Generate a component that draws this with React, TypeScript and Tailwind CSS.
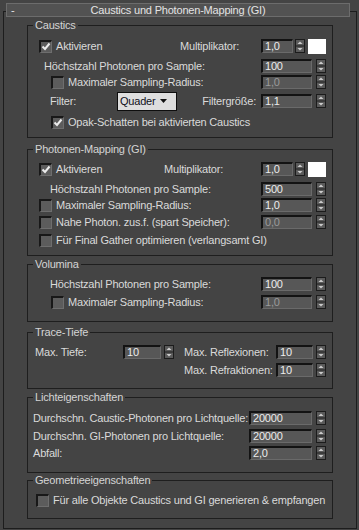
import type { ReactNode } from "react";

const font = "font-['Liberation_Sans',Arial,sans-serif] text-[11px] tracking-[-0.2px]";

function Check({ checked }: { checked?: boolean }) {
  return (
    <span className="w-[13px] h-[13px] shrink-0 flex items-center justify-center bg-[#5c5c5c] border-t-2 border-l-2 border-t-[#181818] border-l-[#181818] border-b border-r border-b-[#6e6e6e] border-r-[#6e6e6e]">
      {checked && (
        <svg width="10" height="9" viewBox="0 0 10 9">
          <path d="M1.5 4.5 L4 7 L8.5 1.5" fill="none" stroke="#ececec" strokeWidth="2" />
        </svg>
      )}
    </span>
  );
}

function Field({ w, value, disabled }: { w: string; value: string; disabled?: boolean }) {
  return (
    <div
      className={`${w} h-[14px] shrink-0 flex items-center pl-[2px] leading-none bg-[#575757] border-t-2 border-l-2 border-t-[#131313] border-l-[#131313] border-b border-r border-b-[#6a6a6a] border-r-[#6a6a6a] ${
        disabled ? "text-[#9a9a9a]" : "text-[#ececec]"
      }`}
    >
      {value}
    </div>
  );
}

function Spin() {
  return (
    <svg width="10" height="14" viewBox="0 0 10 14" className="shrink-0">
      <rect x="0.5" y="0.5" width="9" height="13" fill="#5a5a5a" stroke="#1c1c1c" />
      <line x1="0" y1="7" x2="10" y2="7" stroke="#1c1c1c" />
      <path d="M2.5 5 L5 2.5 L7.5 5Z" fill="#cccccc" />
      <path d="M2.5 9 L5 11.5 L7.5 9Z" fill="#cccccc" />
    </svg>
  );
}

function Group({ title, className, children }: { title: string; className: string; children: ReactNode }) {
  return (
    <div className={`relative ml-[23px] w-[306px] border border-[#1e1e1e] flex flex-col ${className}`}>
      <span className="absolute left-[5px] -top-[8px] px-[2px] bg-[#444444] leading-[14px] text-[#d4d4d4]">{title}</span>
      {children}
    </div>
  );
}

function Row({ className, children }: { className: string; children: ReactNode }) {
  return <div className={`flex items-center h-[16px] pr-[6px] ${className}`}>{children}</div>;
}

export default function App() {
  return (
    <div className={`w-[359px] h-[530px] bg-[#444444] pt-[11px] pl-[3px] overflow-hidden text-[#dadada] ${font}`}>
      <div className="w-[354px] h-[518px] border border-[#1d1d1d] flex flex-col">
        <div className="relative -mt-[9px] ml-[2px] w-[344px] h-[14px] bg-[#525252] border border-[#6c6c6c] flex items-center justify-center leading-none text-[#e4e4e4]">
          <span className="absolute left-[4px] top-0 leading-[12px]">-</span>
          Caustics und Photonen-Mapping (GI)
        </div>

        <Group title="Caustics" className="mt-[8px] h-[113px] pt-[12px]">
          <Row className="pl-[11px]">
            <Check checked />
            <span className="ml-[4px]">Aktivieren</span>
            <span className="ml-auto mr-[22px]">Multiplikator:</span>
            <Field w="w-[32px]" value="1,0" />
            <span className="ml-[2px]"><Spin /></span>
            <div className="ml-[3px] w-[18px] h-[15px] bg-white" />
          </Row>
          <Row className="mt-[4px] pl-[16px]">
            <span>Höchstzahl Photonen pro Sample:</span>
            <span className="ml-auto" />
            <Field w="w-[51px]" value="100" />
            <span className="ml-[4px]"><Spin /></span>
          </Row>
          <Row className="pl-[23px]">
            <Check />
            <span className="ml-[4px]">Maximaler Sampling-Radius:</span>
            <span className="ml-auto" />
            <Field w="w-[51px]" value="1,0" disabled />
            <span className="ml-[4px]"><Spin /></span>
          </Row>
          <Row className="mt-[3px] pl-[22px]">
            <span className="w-[67px]">Filter:</span>
            <div className="w-[60px] h-[19px] shrink-0 flex items-center justify-between pl-[2px] pr-[9px] bg-[#dedede] border border-[#0e0e0e] text-[#101020] leading-none">
              Quader
              <svg width="7" height="4" viewBox="0 0 7 4">
                <path d="M0 0 L7 0 L3.5 4Z" fill="#111111" />
              </svg>
            </div>
            <span className="ml-auto mr-[5px]">Filtergröße:</span>
            <Field w="w-[51px]" value="1,1" />
            <span className="ml-[4px]"><Spin /></span>
          </Row>
          <Row className="mt-[5px] pl-[23px]">
            <Check checked />
            <span className="ml-[4px]">Opak-Schatten bei aktivierten Caustics</span>
          </Row>
        </Group>

        <Group title="Photonen-Mapping (GI)" className="mt-[11px] h-[107px] pt-[11px]">
          <Row className="pl-[11px]">
            <Check checked />
            <span className="ml-[4px]">Aktivieren</span>
            <span className="ml-auto mr-[38px]">Multiplikator:</span>
            <Field w="w-[32px]" value="1,0" />
            <span className="ml-[2px]"><Spin /></span>
            <div className="ml-[3px] w-[18px] h-[15px] bg-white" />
          </Row>
          <Row className="mt-[4px] pl-[22px]">
            <span>Höchstzahl Photonen pro Sample:</span>
            <span className="ml-auto" />
            <Field w="w-[51px]" value="500" />
            <span className="ml-[4px]"><Spin /></span>
          </Row>
          <Row className="pl-[11px]">
            <Check />
            <span className="ml-[4px]">Maximaler Sampling-Radius:</span>
            <span className="ml-auto" />
            <Field w="w-[51px]" value="1,0" />
            <span className="ml-[4px]"><Spin /></span>
          </Row>
          <Row className="mt-[1px] pl-[11px]">
            <Check />
            <span className="ml-[4px]">Nahe Photon. zus.f. (spart Speicher):</span>
            <span className="ml-auto" />
            <Field w="w-[51px]" value="0,0" disabled />
            <span className="ml-[4px]"><Spin /></span>
          </Row>
          <Row className="mt-[2px] pl-[11px]">
            <Check />
            <span className="ml-[4px]">Für Final Gather optimieren (verlangsamt GI)</span>
          </Row>
        </Group>

        <Group title="Volumina" className="mt-[8px] h-[58px] pt-[11px]">
          <Row className="pl-[22px]">
            <span>Höchstzahl Photonen pro Sample:</span>
            <span className="ml-auto" />
            <Field w="w-[51px]" value="100" />
            <span className="ml-[4px]"><Spin /></span>
          </Row>
          <Row className="mt-[2px] pl-[23px]">
            <Check />
            <span className="ml-[4px]">Maximaler Sampling-Radius:</span>
            <span className="ml-auto" />
            <Field w="w-[51px]" value="1,0" disabled />
            <span className="ml-[4px]"><Spin /></span>
          </Row>
        </Group>

        <Group title="Trace-Tiefe" className="mt-[10px] h-[57px] pt-[11px]">
          <Row className="pl-[7px]">
            <span className="w-[88px] shrink-0">Max. Tiefe:</span>
            <Field w="w-[38px]" value="10" />
            <span className="ml-[3px]"><Spin /></span>
            <span className="ml-[10px] w-[92px] shrink-0">Max. Reflexionen:</span>
            <Field w="w-[37px]" value="10" />
            <span className="ml-[3px]"><Spin /></span>
          </Row>
          <Row className="mt-[2px] pl-[156px]">
            <span className="w-[92px] shrink-0 whitespace-nowrap">Max. Refraktionen:</span>
            <Field w="w-[37px]" value="10" />
            <span className="ml-[3px]"><Spin /></span>
          </Row>
        </Group>

        <Group title="Lichteigenschaften" className="mt-[8px] h-[76px] pt-[12px]">
          <Row className="pl-[5px]">
            <span className="whitespace-nowrap">Durchschn. Caustic-Photonen pro Lichtquelle:</span>
            <span className="ml-auto" />
            <Field w="w-[63px]" value="20000" />
            <span className="ml-[4px]"><Spin /></span>
          </Row>
          <Row className="mt-[2px] pl-[5px]">
            <span>Durchschn. GI-Photonen pro Lichtquelle:</span>
            <span className="ml-auto" />
            <Field w="w-[63px]" value="20000" />
            <span className="ml-[4px]"><Spin /></span>
          </Row>
          <Row className="mt-[1px] pl-[5px]">
            <span>Abfall:</span>
            <span className="ml-auto" />
            <Field w="w-[63px]" value="2,0" />
            <span className="ml-[4px]"><Spin /></span>
          </Row>
        </Group>

        <Group title="Geometrieeigenschaften" className="mt-[7px] h-[39px] pt-[11px]">
          <Row className="pl-[8px]">
            <Check />
            <span className="ml-[4px] whitespace-nowrap">Für alle Objekte Caustics und GI generieren &amp; empfangen</span>
          </Row>
        </Group>
      </div>
    </div>
  );
}
